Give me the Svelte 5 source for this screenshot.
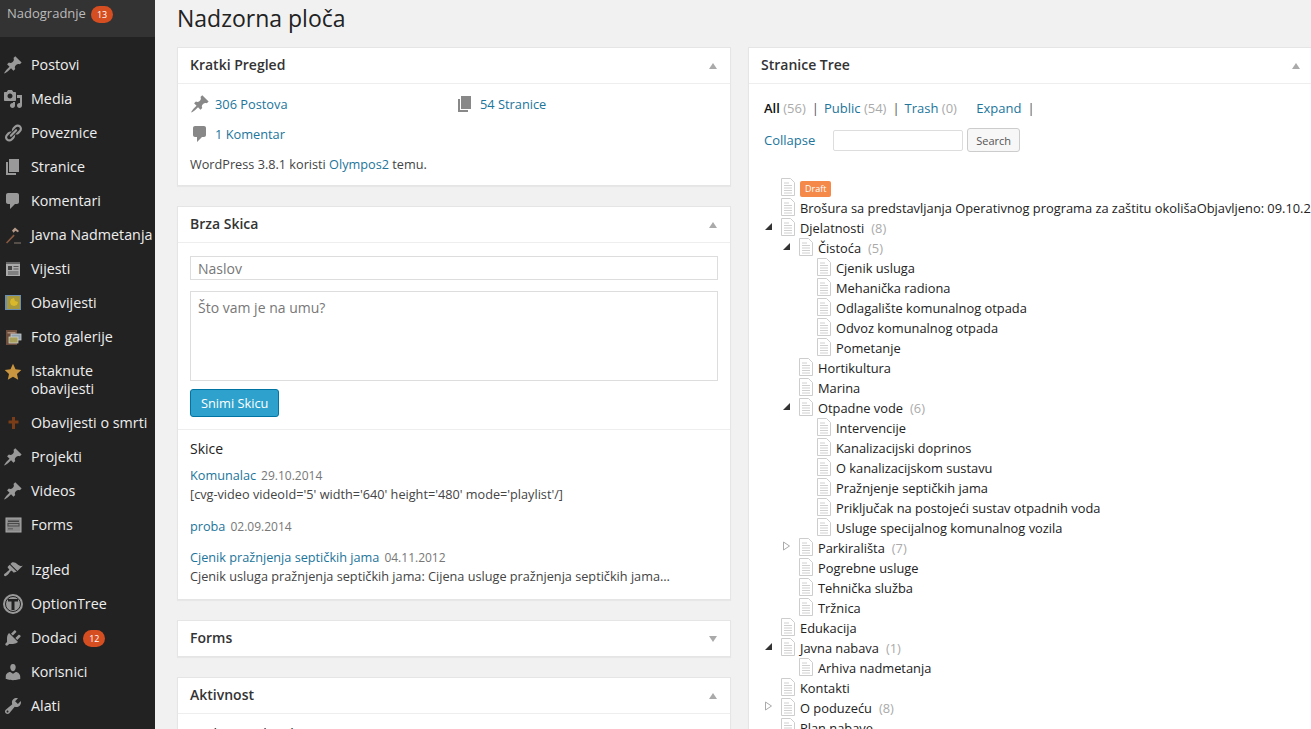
<script>
	const P = {
		pin: 'M10.44 3.02l1.82-1.82 6.36 6.35-1.83 1.82c-1.05-.68-2.48-.57-3.41.36l-.75.75c-.92.93-1.04 2.35-.35 3.41l-1.83 1.82-2.41-2.41-2.8 2.79c-.42.42-3.38 2.71-3.8 2.29s1.86-3.39 2.28-3.81l2.79-2.79L4.1 9.36l1.83-1.82c1.05.69 2.48.57 3.4-.36l.75-.75c.93-.92 1.05-2.35.36-3.41z',
		media: 'M13 11V4c0-.55-.45-1-1-1h-1.67L9 1H5L3.67 3H2c-.55 0-1 .45-1 1v7c0 .55.45 1 1 1h10c.55 0 1-.45 1-1zM7 4.5c1.38 0 2.5 1.12 2.5 2.5S8.38 9.5 7 9.5 4.5 8.38 4.5 7 5.62 4.5 7 4.5zM14 6h5v10.5c0 1.38-1.12 2.5-2.5 2.5S14 17.88 14 16.5s1.12-2.5 2.5-2.5c.17 0 .34.02.5.05V9h-3V6zm-4 8.05V13h2v3.5c0 1.38-1.12 2.5-2.5 2.5S7 17.88 7 16.5 8.12 14 9.5 14c.17 0 .34.02.5.05z',
		link: 'M17.74 2.76c1.68 1.69 1.68 4.41 0 6.1l-1.53 1.52c-1.12 1.12-2.7 1.47-4.14 1.09l2.62-2.61.76-.77.76-.76c.84-.84.84-2.2 0-3.04-.84-.85-2.2-.85-3.04 0l-.77.76-3.38 3.38c-.37-1.44-.02-3.02 1.1-4.14l1.52-1.53c1.69-1.68 4.42-1.68 6.1 0zM8.59 13.43l5.34-5.34c.42-.42.42-1.1 0-1.52-.44-.43-1.13-.39-1.53 0l-5.33 5.34c-.42.42-.42 1.1 0 1.52.44.43 1.13.39 1.52 0zm-.76 2.29l4.14-4.15c.38 1.44.03 3.02-1.09 4.14l-1.52 1.53c-1.69 1.68-4.41 1.68-6.1 0-1.68-1.68-1.68-4.42 0-6.1l1.53-1.52c1.12-1.12 2.7-1.47 4.14-1.1l-4.14 4.15c-.85.84-.85 2.2 0 3.05.84.84 2.2.84 3.04 0z',
		page: 'M6 15V2h10v13H6zm-1 1h8v2H3V5h2v11z',
		comment: 'M5 2h9c1.1 0 2 .9 2 2v7c0 1.1-.9 2-2 2h-2l-5 5v-5H5c-1.1 0-2-.9-2-2V4c0-1.1.9-2 2-2z',
		brush: 'M14.48 11.06L7.41 3.99l1.5-1.5c.5-.56 2.3-.47 3.51.32 1.21.8 1.43 1.28 2.91 2.1 1.18.64 2.45 1.26 4.45.85zm-.71.71L6.7 4.7 4.93 6.47c-.39.39-.39 1.02 0 1.41l1.06 1.06c.39.39.39 1.03 0 1.42-.6.6-1.43 1.11-2.21 1.69-.35.26-.7.53-1.01.84C1.43 13.23.4 14.89 1.3 15.8c.9.9 2.57-.13 3.91-1.47.31-.31.58-.66.84-1.01.58-.78 1.09-1.61 1.69-2.21.39-.39 1.02-.39 1.41 0l1.06 1.06c.39.39 1.02.39 1.41 0z',
		plug: 'M13.11 4.36L9.87 7.6 8 5.73l3.24-3.24c.35-.34 1.05-.2 1.56.32.52.51.66 1.21.31 1.55zm-8 1.77l.91-1.12 9.01 9.01-1.19.84c-.71.71-2.63 1.16-3.82 1.16H6.14L4.9 17.26c-.59.59-1.54.59-2.12 0-.59-.58-.59-1.53 0-2.12l1.24-1.24v-3.88c0-1.13.4-3.19 1.09-3.89zm7.26 3.97l3.24-3.24c.34-.35 1.04-.21 1.55.31.52.51.66 1.21.31 1.55l-3.24 3.25z',
		user: 'M10 9.25c-2.27 0-2.73-3.44-2.73-3.44C7 4.02 7.82 2 9.97 2c2.16 0 2.98 2.02 2.71 3.81 0 0-.41 3.44-2.68 3.44zm0 2.57L12.72 10c2.39 0 4.52 2.33 4.52 4.53v2.49s-3.65 1.13-7.24 1.13c-3.65 0-7.24-1.13-7.24-1.13v-2.49c0-2.25 1.94-4.48 4.47-4.48z',
		tools: 'M16.68 9.77c-1.34 1.34-3.3 1.67-4.95.99l-5.41 6.52c-.99.99-2.59.99-3.58 0s-.99-2.59 0-3.57l6.52-5.42c-.68-1.65-.35-3.61.99-4.95 1.28-1.28 3.12-1.62 4.72-1.06l-2.89 2.89 2.82 2.82 2.86-2.87c.53 1.58.18 3.39-1.08 4.65zM3.81 16.21c.4.39 1.04.39 1.43 0 .4-.4.4-1.04 0-1.43-.39-.4-1.03-.4-1.43 0-.39.39-.39 1.03 0 1.43z'
	};

	const menu = [
		{ label: 'Postovi', icon: 'pin' },
		{ label: 'Media', icon: 'media' },
		{ label: 'Poveznice', icon: 'link' },
		{ label: 'Stranice', icon: 'page' },
		{ label: 'Komentari', icon: 'comment' },
		{ label: 'Javna Nadmetanja', icon: 'hammer' },
		{ label: 'Vijesti', icon: 'news' },
		{ label: 'Obavijesti', icon: 'notice' },
		{ label: 'Foto galerije', icon: 'gallery' },
		{ label: 'Istaknute obavijesti', icon: 'star', tall: true },
		{ label: 'Obavijesti o smrti', icon: 'cross' },
		{ label: 'Projekti', icon: 'pin' },
		{ label: 'Videos', icon: 'pin' },
		{ label: 'Forms', icon: 'forms' },
		{ sep: true },
		{ label: 'Izgled', icon: 'brush' },
		{ label: 'OptionTree', icon: 'ot' },
		{ label: 'Dodaci', icon: 'plug', badge: 12 },
		{ label: 'Korisnici', icon: 'user' },
		{ label: 'Alati', icon: 'tools' }
	];

	const tree = [
		{ l: 0, draft: true },
		{ l: 0, t: 'Brošura sa predstavljanja Operativnog programa za zaštitu okolišaObjavljeno: 09.10.2014' },
		{ l: 0, t: 'Djelatnosti', n: 8, open: true },
		{ l: 1, t: 'Čistoća', n: 5, open: true },
		{ l: 2, t: 'Cjenik usluga' },
		{ l: 2, t: 'Mehanička radiona' },
		{ l: 2, t: 'Odlagalište komunalnog otpada' },
		{ l: 2, t: 'Odvoz komunalnog otpada' },
		{ l: 2, t: 'Pometanje' },
		{ l: 1, t: 'Hortikultura' },
		{ l: 1, t: 'Marina' },
		{ l: 1, t: 'Otpadne vode', n: 6, open: true },
		{ l: 2, t: 'Intervencije' },
		{ l: 2, t: 'Kanalizacijski doprinos' },
		{ l: 2, t: 'O kanalizacijskom sustavu' },
		{ l: 2, t: 'Pražnjenje septičkih jama' },
		{ l: 2, t: 'Priključak na postojeći sustav otpadnih voda' },
		{ l: 2, t: 'Usluge specijalnog komunalnog vozila' },
		{ l: 1, t: 'Parkirališta', n: 7, closed: true },
		{ l: 1, t: 'Pogrebne usluge' },
		{ l: 1, t: 'Tehnička služba' },
		{ l: 1, t: 'Tržnica' },
		{ l: 0, t: 'Edukacija' },
		{ l: 0, t: 'Javna nabava', n: 1, open: true },
		{ l: 1, t: 'Arhiva nadmetanja' },
		{ l: 0, t: 'Kontakti' },
		{ l: 0, t: 'O poduzeću', n: 8, closed: true },
		{ l: 0, t: 'Plan nabave' }
	];
</script>

{#snippet dash(name, size = 20)}
	<svg class="dash" width={size} height={size} viewBox="0 0 20 20"><path d={P[name]} /></svg>
{/snippet}

{#snippet menuIcon(name)}
	{#if P[name]}
		{@render dash(name)}
	{:else if name === 'hammer'}
		<svg width="20" height="20" viewBox="0 0 20 20">
			<path d="M3 17.500l7.500-8 1.200 1.200-7.600 7.800z" fill="#8a5a40" />
			<path d="M9 5.500l3-3 4 3.500-1.200 1.200-2.300-1.500-2 2z" fill="#b59a8a" />
			<path d="M11 17.500h7v1h-7z" fill="#8a7a70" />
		</svg>
	{:else if name === 'news'}
		<svg width="20" height="20" viewBox="0 0 20 20">
			<rect x="3" y="3" width="14" height="14" fill="#aaa" />
			<rect x="3" y="3" width="14" height="2" fill="#666" />
			<rect x="5" y="7" width="4" height="4" fill="#444" />
			<path d="M10.500 7.500h5M10.500 10h5M5 13h10.500M5 15h10.500" stroke="#555" stroke-width="1" />
		</svg>
	{:else if name === 'notice'}
		<svg width="20" height="20" viewBox="0 0 20 20">
			<rect x="2" y="2" width="16" height="15" fill="#6c8fb0" />
			<rect x="4" y="3" width="13" height="13" fill="#a89a3c" />
			<path d="M8 6l3-1 1 3 3 1-1 3-3 1-3-1-1-3z" fill="#d9b92a" />
		</svg>
	{:else if name === 'gallery'}
		<svg width="20" height="20" viewBox="0 0 20 20">
			<rect x="3" y="3" width="11" height="15" fill="#6d4d3c" />
			<rect x="4.500" y="5" width="8" height="1.500" fill="#a98a76" />
			<rect x="8" y="7" width="10" height="6" fill="#8fa0ad" stroke="#ccc" stroke-width=".8" />
			<rect x="6" y="10" width="9" height="6" fill="#a8a05a" stroke="#ccc" stroke-width=".8" />
		</svg>
	{:else if name === 'star'}
		<svg width="20" height="20" viewBox="0 0 20 20">
			<path d="M10 1.800l2.500 5.400 5.800.7-4.300 4 1.200 5.800-5.200-2.900-5.200 2.900 1.200-5.800-4.300-4 5.800-.7z" fill="#c9953f" />
		</svg>
	{:else if name === 'cross'}
		<svg width="20" height="20" viewBox="0 0 20 20">
			<path d="M9 4h3v3.500h3.500v3H12V16H9v-5.500H5.500v-3H9z" fill="#7a3d17" />
		</svg>
	{:else if name === 'forms'}
		<svg width="20" height="20" viewBox="0 0 20 20">
			<rect x="3" y="3" width="15" height="14" fill="#8a8a8a" stroke="#aaa" />
			<rect x="5" y="5.500" width="11" height="1.500" fill="#444" />
			<rect x="5" y="8.500" width="11" height="2.500" fill="none" stroke="#444" stroke-width=".9" />
			<rect x="5" y="13" width="5" height="1.500" fill="#666" />
		</svg>
	{:else if name === 'ot'}
		<svg width="22" height="22" viewBox="0 0 22 22">
			<circle cx="11" cy="11" r="10" fill="#999" />
			<circle cx="11" cy="11" r="7.500" fill="none" stroke="#222" stroke-width="1" />
			<path d="M6 6h10v2.500h-3.500V17h-3V8.500H6z" fill="#222" />
		</svg>
	{/if}
{/snippet}

{#snippet head(title, down = false)}
	<div class="head">
		<h3>{title}</h3>
		<span class="toggle" class:down></span>
	</div>
{/snippet}

{#snippet doc()}
	<svg class="doc" width="16" height="18" viewBox="0 0 16 18">
		<path d="M1.500.5h9l4 4v13h-13z" fill="#fff" stroke="#cdcdcd" />
		<path d="M4 5h5M4 7.500h8M4 10h8M4 12.500h8M4 15h8" stroke="#d0d0d0" />
	</svg>
{/snippet}

<div class="page">
	<nav class="side">
		<div class="upgrades">
			<span>Nadogradnje</span>
			<span class="badge">13</span>
		</div>
		<ul>
			{#each menu as m}
				{#if m.sep}
					<li class="sep"></li>
				{:else}
					<li class:tall={m.tall}>
						<span class="ico">{@render menuIcon(m.icon)}</span>
						<span class="lbl">{m.label}{#if m.badge}<span class="badge">{m.badge}</span>{/if}</span>
					</li>
				{/if}
			{/each}
		</ul>
	</nav>

	<main>
		<h1>Nadzorna ploča</h1>
		<div class="cols">
			<div class="col">
				<section class="box">
					{@render head('Kratki Pregled')}
					<div class="glance">
						<div class="stats">
							<a href="#a">{@render dash('pin')}306 Postova</a>
							<a href="#a">{@render dash('page')}54 Stranice</a>
							<a href="#a">{@render dash('comment')}1 Komentar</a>
						</div>
						<p>WordPress 3.8.1 koristi <a href="#a">Olympos2</a> temu.</p>
					</div>
				</section>

				<section class="box">
					{@render head('Brza Skica')}
					<form class="quick">
						<input type="text" placeholder="Naslov" />
						<textarea placeholder="Što vam je na umu?"></textarea>
						<button type="button">Snimi Skicu</button>
					</form>
					<div class="drafts">
						<h4>Skice</h4>
						<div class="draft">
							<div><a href="#a">Komunalac</a><time>29.10.2014</time></div>
							<p>[cvg-video videoId='5' width='640' height='480' mode='playlist'/]</p>
						</div>
						<div class="draft">
							<div><a href="#a">proba</a><time>02.09.2014</time></div>
						</div>
						<div class="draft">
							<div><a href="#a">Cjenik pražnjenja septičkih jama</a><time>04.11.2012</time></div>
							<p>Cjenik usluga pražnjenja septičkih jama: Cijena usluge pražnjenja septičkih jama…</p>
						</div>
					</div>
				</section>

				<section class="box">
					{@render head('Forms', true)}
				</section>

				<section class="box">
					{@render head('Aktivnost')}
					<div class="recent">Nedavno Objavljeno</div>
				</section>
			</div>

			<div class="col">
				<section class="box wide">
					{@render head('Stranice Tree')}
					<div class="filters">
						<div class="line">
							<b>All</b> <i>(56)</i><span class="bar">|</span><a href="#a">Public</a> <i>(54)</i><span class="bar">|</span><a href="#a">Trash</a> <i>(0)</i>
							<a class="expand" href="#a">Expand</a><span class="bar">|</span>
						</div>
						<div class="line search">
							<a href="#a">Collapse</a>
							<input type="text" />
							<button type="button">Search</button>
						</div>
					</div>
					<ul class="tree">
						{#each tree as row}
							<li class="l{row.l}">
								<span class="arrow">
									{#if row.open}
										<svg width="9" height="9" viewBox="0 0 9 9"><path d="M8 1v7H1z" fill="#333" /></svg>
									{:else if row.closed}
										<svg width="9" height="10" viewBox="0 0 9 10"><path d="M1.500 1l6 4-6 4z" fill="#fff" stroke="#aaa" /></svg>
									{/if}
								</span>
								{@render doc()}
								{#if row.draft}
									<span class="tag">Draft</span>
								{:else}
									<span class="name">{row.t}</span>
									{#if row.n}<span class="count">({row.n})</span>{/if}
								{/if}
							</li>
						{/each}
					</ul>
				</section>
			</div>
		</div>
	</main>
</div>

<style>
	:global(body) {
		margin: 0;
		background: #f1f1f1;
		overflow: hidden;
	}
	.page {
		display: flex;
		height: 729px;
		overflow: hidden;
		font-family: 'Open Sans', sans-serif;
		font-size: 13px;
		color: #444;
	}
	a {
		color: #21759b;
		text-decoration: none;
	}
	ul {
		list-style: none;
		margin: 0;
		padding: 0;
	}

	/* admin menu */
	.side {
		width: 155px;
		flex: none;
		background: #222;
		color: #eee;
	}
	.upgrades {
		height: 37px;
		box-sizing: border-box;
		padding: 4px 0 0 7px;
		background: #333;
		color: #bbb;
		font-size: 13px;
		line-height: 18px;
		margin-bottom: 11px;
		display: flex;
		gap: 5px;
		align-items: flex-start;
	}
	.side li {
		height: 34px;
		display: flex;
		align-items: center;
		font-size: 14.300px;
		line-height: 18px;
		white-space: nowrap;
	}
	.side li.tall {
		height: 52px;
		white-space: normal;
		align-items: flex-start;
		padding-top: 8px;
		box-sizing: border-box;
	}
	.side li.sep {
		height: 11px;
	}
	.ico {
		width: 31px;
		flex: none;
		display: flex;
		justify-content: center;
		padding-right: 6px;
		box-sizing: border-box;
	}
	.lbl {
		display: flex;
		align-items: center;
		flex-wrap: wrap;
		width: 90px;
		white-space: inherit;
	}
	.side li:not(.tall) .lbl {
		width: auto;
	}
	.dash {
		fill: #999;
		flex: none;
	}
	.badge {
		display: inline-block;
		background: #d54e21;
		color: #fff;
		font-size: 9px;
		line-height: 17px;
		height: 17px;
		min-width: 7px;
		padding: 0 6px;
		border-radius: 9px;
		margin-left: 6px;
	}
	.upgrades .badge {
		margin: 2px 0 0;
	}

	/* main */
	main {
		flex: 1;
		min-width: 0;
		padding-left: 22px;
	}
	h1 {
		margin: 0;
		height: 47px;
		font-size: 23px;
		font-weight: 400;
		line-height: 37px;
		color: #222;
	}
	.cols {
		display: grid;
		grid-template-columns: 554px 566px;
		gap: 17px;
	}
	.box {
		background: #fff;
		border: 1px solid #e5e5e5;
		box-shadow: 0 1px 1px rgba(0, 0, 0, 0.04);
		margin-bottom: 20px;
	}
	.head {
		height: 35px;
		display: flex;
		align-items: center;
		justify-content: space-between;
		padding: 0 12px;
	}
	.head + * {
		border-top: 1px solid #eee;
	}
	h3 {
		margin: -2px 0 0;
		font-size: 14px;
		font-weight: 600;
		color: #333;
	}
	.toggle {
		width: 0;
		height: 0;
		border: 4px solid transparent;
		border-top: 0;
		border-bottom: 6px solid #aaa;
		margin-right: 1px;
	}
	.toggle.down {
		border-bottom: 0;
		border-top: 6px solid #aaa;
	}

	.glance {
		padding: 10px 12px 11px;
	}
	.stats {
		display: grid;
		grid-template-columns: 265px 1fr;
		row-gap: 10px;
	}
	.stats a {
		display: flex;
		align-items: center;
		gap: 5px;
		height: 20px;
		font-size: 12.800px;
	}
	.stats .dash {
		fill: #888;
	}
	.glance p {
		margin: 10px 0 0;
		line-height: 20px;
		font-size: 12.700px;
	}

	.quick {
		padding: 13px 12px 12px;
		display: flex;
		flex-direction: column;
		align-items: flex-start;
		border-bottom: 1px solid #eee;
	}
	input,
	textarea {
		box-sizing: border-box;
		border: 1px solid #ddd;
		background: #fff;
		font-family: inherit;
		margin: 0;
		outline: none;
	}
	input::placeholder,
	textarea::placeholder {
		color: #777;
		opacity: 1;
	}
	.quick input {
		width: 100%;
		height: 24px;
		padding: 0 7px;
		font-size: 14px;
	}
	.quick textarea {
		width: 100%;
		height: 90px;
		margin: 11px 0 8px;
		padding: 6px 7px;
		font-size: 14px;
		resize: none;
	}
	.quick button {
		height: 28px;
		padding: 0 10px;
		background: #2ea2cc;
		border: 1px solid #0074a2;
		border-radius: 3px;
		color: #fff;
		font-family: inherit;
		font-size: 12.800px;
	}
	.drafts {
		padding: 9px 12px 13px;
		font-size: 12px;
		line-height: 19px;
	}
	h4 {
		margin: 0 0 7px;
		font-size: 14px;
		font-weight: 400;
		color: #222;
		line-height: 20px;
	}
	.draft {
		margin-bottom: 12.500px;
	}
	.draft:last-child {
		margin-bottom: 0;
	}
	.draft a {
		font-size: 12.700px;
	}
	.draft time {
		margin-left: 5px;
		color: #777;
	}
	.draft p {
		margin: 0;
		color: #444;
		font-size: 12.700px;
		white-space: nowrap;
	}
	.recent {
		padding: 11px 12px;
		font-size: 14px;
		line-height: 18px;
		color: #222;
	}

	/* page tree */
	.wide {
		margin-bottom: 0;
		min-height: 700px;
	}
	.filters {
		padding: 14px 15px 0;
		font-size: 13px;
		color: #555;
		line-height: 20px;
	}
	.line b {
		font-weight: 600;
		color: #111;
	}
	.line i {
		font-style: normal;
		color: #aaa;
	}
	.bar {
		margin: 0 5px 0 6px;
	}
	.expand {
		margin-left: 16px;
	}
	.search {
		display: flex;
		align-items: center;
		margin-top: 10px;
	}
	.search input {
		width: 130px;
		height: 21px;
		margin-left: 18px;
		border-radius: 2px;
	}
	.search button {
		height: 24px;
		margin-left: 4px;
		padding: 0 8px;
		background: #f7f7f7;
		border: 1px solid #ccc;
		border-radius: 3px;
		color: #555;
		font-family: inherit;
		font-size: 11px;
	}
	.tree {
		margin-top: 26px;
		white-space: nowrap;
		color: #222;
		font-size: 12.850px;
	}
	.tree li {
		height: 20px;
		display: flex;
		align-items: center;
	}
	.l0 {
		padding-left: 15px;
	}
	.l1 {
		padding-left: 33px;
	}
	.l2 {
		padding-left: 51px;
	}
	.arrow {
		width: 15px;
		flex: none;
		display: flex;
		margin-right: 1px;
		position: relative;
		top: -2px;
	}
	.doc {
		flex: none;
		margin-right: 4px;
		position: relative;
		top: -1px;
	}
	.tag {
		background: #f4894a;
		color: #fff;
		font-size: 9px;
		line-height: 16px;
		height: 16px;
		padding: 0 5px;
		border-radius: 2px;
		margin-top: 2px;
	}
	.count {
		margin-left: 7px;
		color: #aaa;
	}
</style>
